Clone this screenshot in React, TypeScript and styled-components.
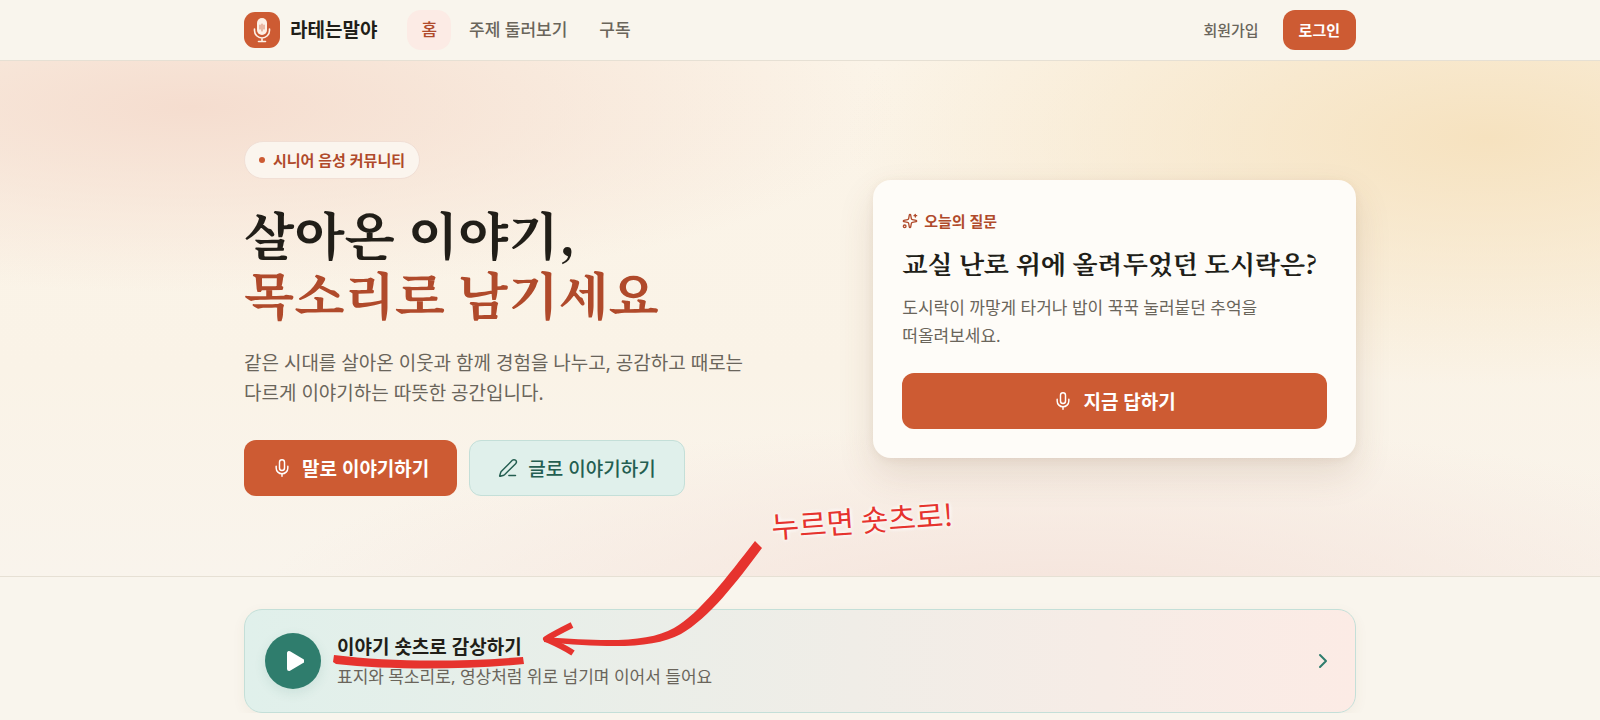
import React from "react";
import styled, { createGlobalStyle, css } from "styled-components";
import { ChevronRight, Mic, PenLine, Sparkles } from "lucide-react";

const color = {
  paper: "#f9f5ed",
  ink: "#211e18",
  muted: "#6a655b",
  brand: "#cd5b33",
  brandDark: "#b04a2b",
  blush: "#fcebe5",
  mint: "#e0f0eb",
  mintLine: "#c4dfd8",
  teal: "#2f7d6d",
  tealDark: "#245e51",
  line: "#e6e0d4",
  marker: "#e6332e",
};

const serif = `"Noto Serif KR", "Noto Serif CJK KR", "Noto Sans CJK KR", serif`;

const GlobalStyle = createGlobalStyle`
  *, *::before, *::after { box-sizing: border-box; }
  body {
    margin: 0;
    overflow-x: hidden;
    background: ${color.paper};
    color: ${color.ink};
    font-family: "Noto Sans", "Noto Sans CJK KR", sans-serif;
    font-size: 17px;
    word-break: keep-all;
  }
  h1, h2, p { margin: 0; }
  a { color: inherit; text-decoration: none; }
  button { font: inherit; cursor: pointer; }
`;

const Container = styled.div`
  width: 100%;
  max-width: 1160px;
  margin: 0 auto;
  padding: 0 24px;
`;

const Header = styled.header`
  border-bottom: 1px solid ${color.line};
`;

const HeaderRow = styled(Container)`
  display: flex;
  align-items: center;
  height: 60px;
`;

const Brand = styled.a`
  display: flex;
  align-items: center;
  gap: 10px;
  margin-right: 30px;
  font-size: 19px;
  font-weight: 700;
  line-height: 28px;
`;

const Nav = styled.nav`
  display: flex;
  flex: 1;
  gap: 4px;
`;

const NavLink = styled.a<{ $active?: boolean }>`
  padding: 8px 14px;
  border-radius: 14px;
  font-weight: 500;
  line-height: 24px;
  color: ${(p) => (p.$active ? color.brandDark : color.muted)};
  background: ${(p) => (p.$active ? color.blush : "transparent")};
`;

const Account = styled.div`
  display: flex;
  align-items: center;
  gap: 24px;
  font-size: 15px;
  line-height: 20px;
`;

const SignUp = styled.a`
  font-weight: 500;
  color: ${color.muted};
`;

const LoginButton = styled.button`
  height: 40px;
  padding: 0 16px;
  border: 0;
  border-radius: 12px;
  background: ${color.brand};
  color: #fff;
  font-weight: 700;
`;

const Hero = styled.section`
  border-bottom: 1px solid ${color.line};
  background:
    radial-gradient(ellipse 44% 36% at 12% 9%, #f5ddcf 0%, #f5ddcf00 100%),
    radial-gradient(ellipse 40% 48% at 93% 15%, #f6e2bf 0%, #f6e2bf00 100%),
    radial-gradient(ellipse 50% 36% at 66% 106%, #f5e3db 0%, #f5e3db00 100%),
    linear-gradient(#fbf4e8, #faf3e7 60%, #f9f4ec);
`;

const HeroGrid = styled(Container)`
  display: grid;
  grid-template-columns: 6fr 5fr;
  align-items: center;
  gap: 50px;
  padding-top: 80px;
  padding-bottom: 80px;
`;

const Intro = styled.div`
  display: flex;
  flex-direction: column;
  align-items: flex-start;
`;

const Tag = styled.p`
  display: flex;
  align-items: center;
  gap: 8px;
  height: 38px;
  padding: 0 14px;
  border: 1px solid #f1dfd5;
  border-radius: 19px;
  background: #fbf5ee;
  color: ${color.brandDark};
  font-size: 15px;
  font-weight: 700;
  line-height: 20px;
`;

const Dot = styled.span`
  width: 6px;
  height: 6px;
  border-radius: 50%;
  background: ${color.brand};
`;

const Headline = styled.h1`
  margin-top: 24px;
  font-family: ${serif};
  font-size: 52px;
  font-weight: 700;
  line-height: 60px;
`;

const Accent = styled.span`
  color: ${color.brandDark};
`;

const Lead = styled.p`
  margin-top: 25px;
  max-width: 520px;
  color: ${color.muted};
  font-size: 19px;
  line-height: 30px;
`;

const Actions = styled.div`
  display: flex;
  flex-wrap: wrap;
  gap: 12px;
  margin-top: 32px;
`;

const ActionButton = styled.button<{ $soft?: boolean; $wide?: boolean }>`
  display: flex;
  align-items: center;
  justify-content: center;
  gap: 10px;
  height: 56px;
  padding: 0 28px;
  border: 0;
  border-radius: 12px;
  background: ${color.brand};
  color: #fff;
  font-size: 19px;
  font-weight: 700;
  ${(p) =>
    p.$wide &&
    css`
      width: 100%;
    `}
  ${(p) =>
    p.$soft &&
    css`
      border: 1px solid ${color.mintLine};
      background: ${color.mint};
      color: ${color.tealDark};
      font-weight: 500;
    `}
`;

const QuestionCard = styled.article`
  padding: 29px;
  border-radius: 18px;
  background: #fefcf8;
  box-shadow: 0 16px 36px #78503024, 0 2px 8px #78503014;
`;

const Eyebrow = styled.p`
  display: flex;
  align-items: center;
  gap: 6px;
  color: ${color.brandDark};
  font-size: 15px;
  font-weight: 700;
  line-height: 24px;
`;

const Question = styled.h2`
  margin-top: 10px;
  font-family: ${serif};
  font-size: 26px;
  font-weight: 700;
  line-height: 40px;
`;

const Hint = styled.p`
  margin: 11px 0 23px;
  color: ${color.muted};
  line-height: 28px;
`;

const ShortsSection = styled(Container)`
  padding-top: 32px;
`;

const ShortsCard = styled.a`
  position: relative;
  display: flex;
  align-items: center;
  gap: 16px;
  padding: 20px;
  border: 1px solid ${color.mintLine};
  border-radius: 18px;
  background: linear-gradient(90deg, ${color.mint}, #f0ede7 55%, ${color.blush});
  box-shadow: 0 4px 14px #7850300f;
`;

const PlayDisc = styled.span`
  display: grid;
  place-items: center;
  width: 56px;
  height: 56px;
  border-radius: 50%;
  background: ${color.teal};
  box-shadow: 0 4px 12px #2f7d6d1f;
`;

const ShortsText = styled.div`
  flex: 1;
  padding-top: 2px;
`;

const ShortsTitle = styled.h2`
  font-size: 19px;
  font-weight: 700;
  line-height: 30px;
`;

const ShortsNote = styled.p`
  color: ${color.muted};
  line-height: 30px;
`;

/* Marker annotation drawn over the hero and the shorts card */
const Scribble = styled.svg`
  position: absolute;
  left: 0;
  bottom: 0;
  width: 720px;
  height: 220px;
  pointer-events: none;
  overflow: visible;
`;

const ScribbleLabel = styled.span`
  position: absolute;
  left: 526px;
  bottom: 171px;
  color: ${color.marker};
  font-family: "Nanum Pen Script", "Noto Sans CJK KR", cursive;
  font-size: 30px;
  font-weight: 400;
  line-height: 44px;
  white-space: nowrap;
  text-shadow: 0 0 4px #fff, 0 0 4px #fff;
  transform: rotate(-4deg);
  pointer-events: none;
`;

const BrandMark = () => (
  <svg width="36" height="36" viewBox="0 0 36 36" aria-hidden="true">
    <rect width="36" height="36" rx="11" fill={color.brand} />
    <rect x="13" y="6" width="10" height="17" rx="5" fill="#fdf1e6" />
    <path d="M16 13v4M18 12v7M20 13v4" stroke="#dd9478" strokeWidth="1.2" strokeLinecap="round" />
    <path
      d="M10.500 17v1.500a7.500 7.500 0 0 0 15 0V17M18 26v3M14.500 29.500h7"
      fill="none"
      stroke="#fdf1e6"
      strokeWidth="1.600"
      strokeLinecap="round"
    />
  </svg>
);

export default function App() {
  return (
    <>
      <GlobalStyle />
      <Header>
        <HeaderRow>
          <Brand href="#">
            <BrandMark />
            라테는말야
          </Brand>
          <Nav>
            <NavLink href="#" $active aria-current="page">홈</NavLink>
            <NavLink href="#topics">주제 둘러보기</NavLink>
            <NavLink href="#subscriptions">구독</NavLink>
          </Nav>
          <Account>
            <SignUp href="#signup">회원가입</SignUp>
            <LoginButton type="button">로그인</LoginButton>
          </Account>
        </HeaderRow>
      </Header>
      <main>
        <Hero>
          <HeroGrid>
            <Intro>
              <Tag>
                <Dot />
                시니어 음성 커뮤니티
              </Tag>
              <Headline>
                살아온 이야기,
                <br />
                <Accent>목소리로 남기세요</Accent>
              </Headline>
              <Lead>
                같은 시대를 살아온 이웃과 함께 경험을 나누고, 공감하고 때로는 다르게
                이야기하는 따뜻한 공간입니다.
              </Lead>
              <Actions>
                <ActionButton type="button">
                  <Mic size={20} strokeWidth={1.75} />
                  말로 이야기하기
                </ActionButton>
                <ActionButton type="button" $soft>
                  <PenLine size={20} strokeWidth={1.75} />
                  글로 이야기하기
                </ActionButton>
              </Actions>
            </Intro>
            <QuestionCard>
              <Eyebrow>
                <Sparkles size={16} strokeWidth={2} />
                오늘의 질문
              </Eyebrow>
              <Question>교실 난로 위에 올려두었던 도시락은?</Question>
              <Hint>도시락이 까맣게 타거나 밥이 꾹꾹 눌러붙던 추억을 떠올려보세요.</Hint>
              <ActionButton type="button" $wide>
                <Mic size={20} strokeWidth={1.75} />
                지금 답하기
              </ActionButton>
            </QuestionCard>
          </HeroGrid>
        </Hero>
        <ShortsSection>
          <ShortsCard href="#shorts">
            <PlayDisc>
              <svg width="22" height="22" viewBox="0 0 22 22" aria-hidden="true">
                <path
                  d="M7 3v16L20.500 11z"
                  fill="#fff"
                  stroke="#fff"
                  strokeWidth="4"
                  strokeLinejoin="round"
                />
              </svg>
            </PlayDisc>
            <ShortsText>
              <ShortsTitle>이야기 숏츠로 감상하기</ShortsTitle>
              <ShortsNote>표지와 목소리로, 영상처럼 위로 넘기며 이어서 들어요</ShortsNote>
            </ShortsText>
            <ChevronRight size={24} strokeWidth={2} color={color.teal} />
            <Scribble viewBox="0 0 720 220" aria-hidden="true">
              <path
                fill={color.marker}
                d="M510 49L517 56C491 91 464 126 436 142C408 157 365 156 299 150L299 145C365 150 404 150 429 136C455 121 482 85 510 49Z"
              />
              <path
                fill={color.marker}
                d="M89 163C145 170 212 170 278 165L279 172C216 178 145 178 91 172L88 170Z"
              />
              <path
                d="M327 133C317 138 309 142 301 147C310 151 319 155 328 161"
                fill="none"
                stroke={color.marker}
                strokeWidth="6"
                strokeLinejoin="round"
              />
            </Scribble>
            <ScribbleLabel>누르면 숏츠로!</ScribbleLabel>
          </ShortsCard>
        </ShortsSection>
      </main>
    </>
  );
}
